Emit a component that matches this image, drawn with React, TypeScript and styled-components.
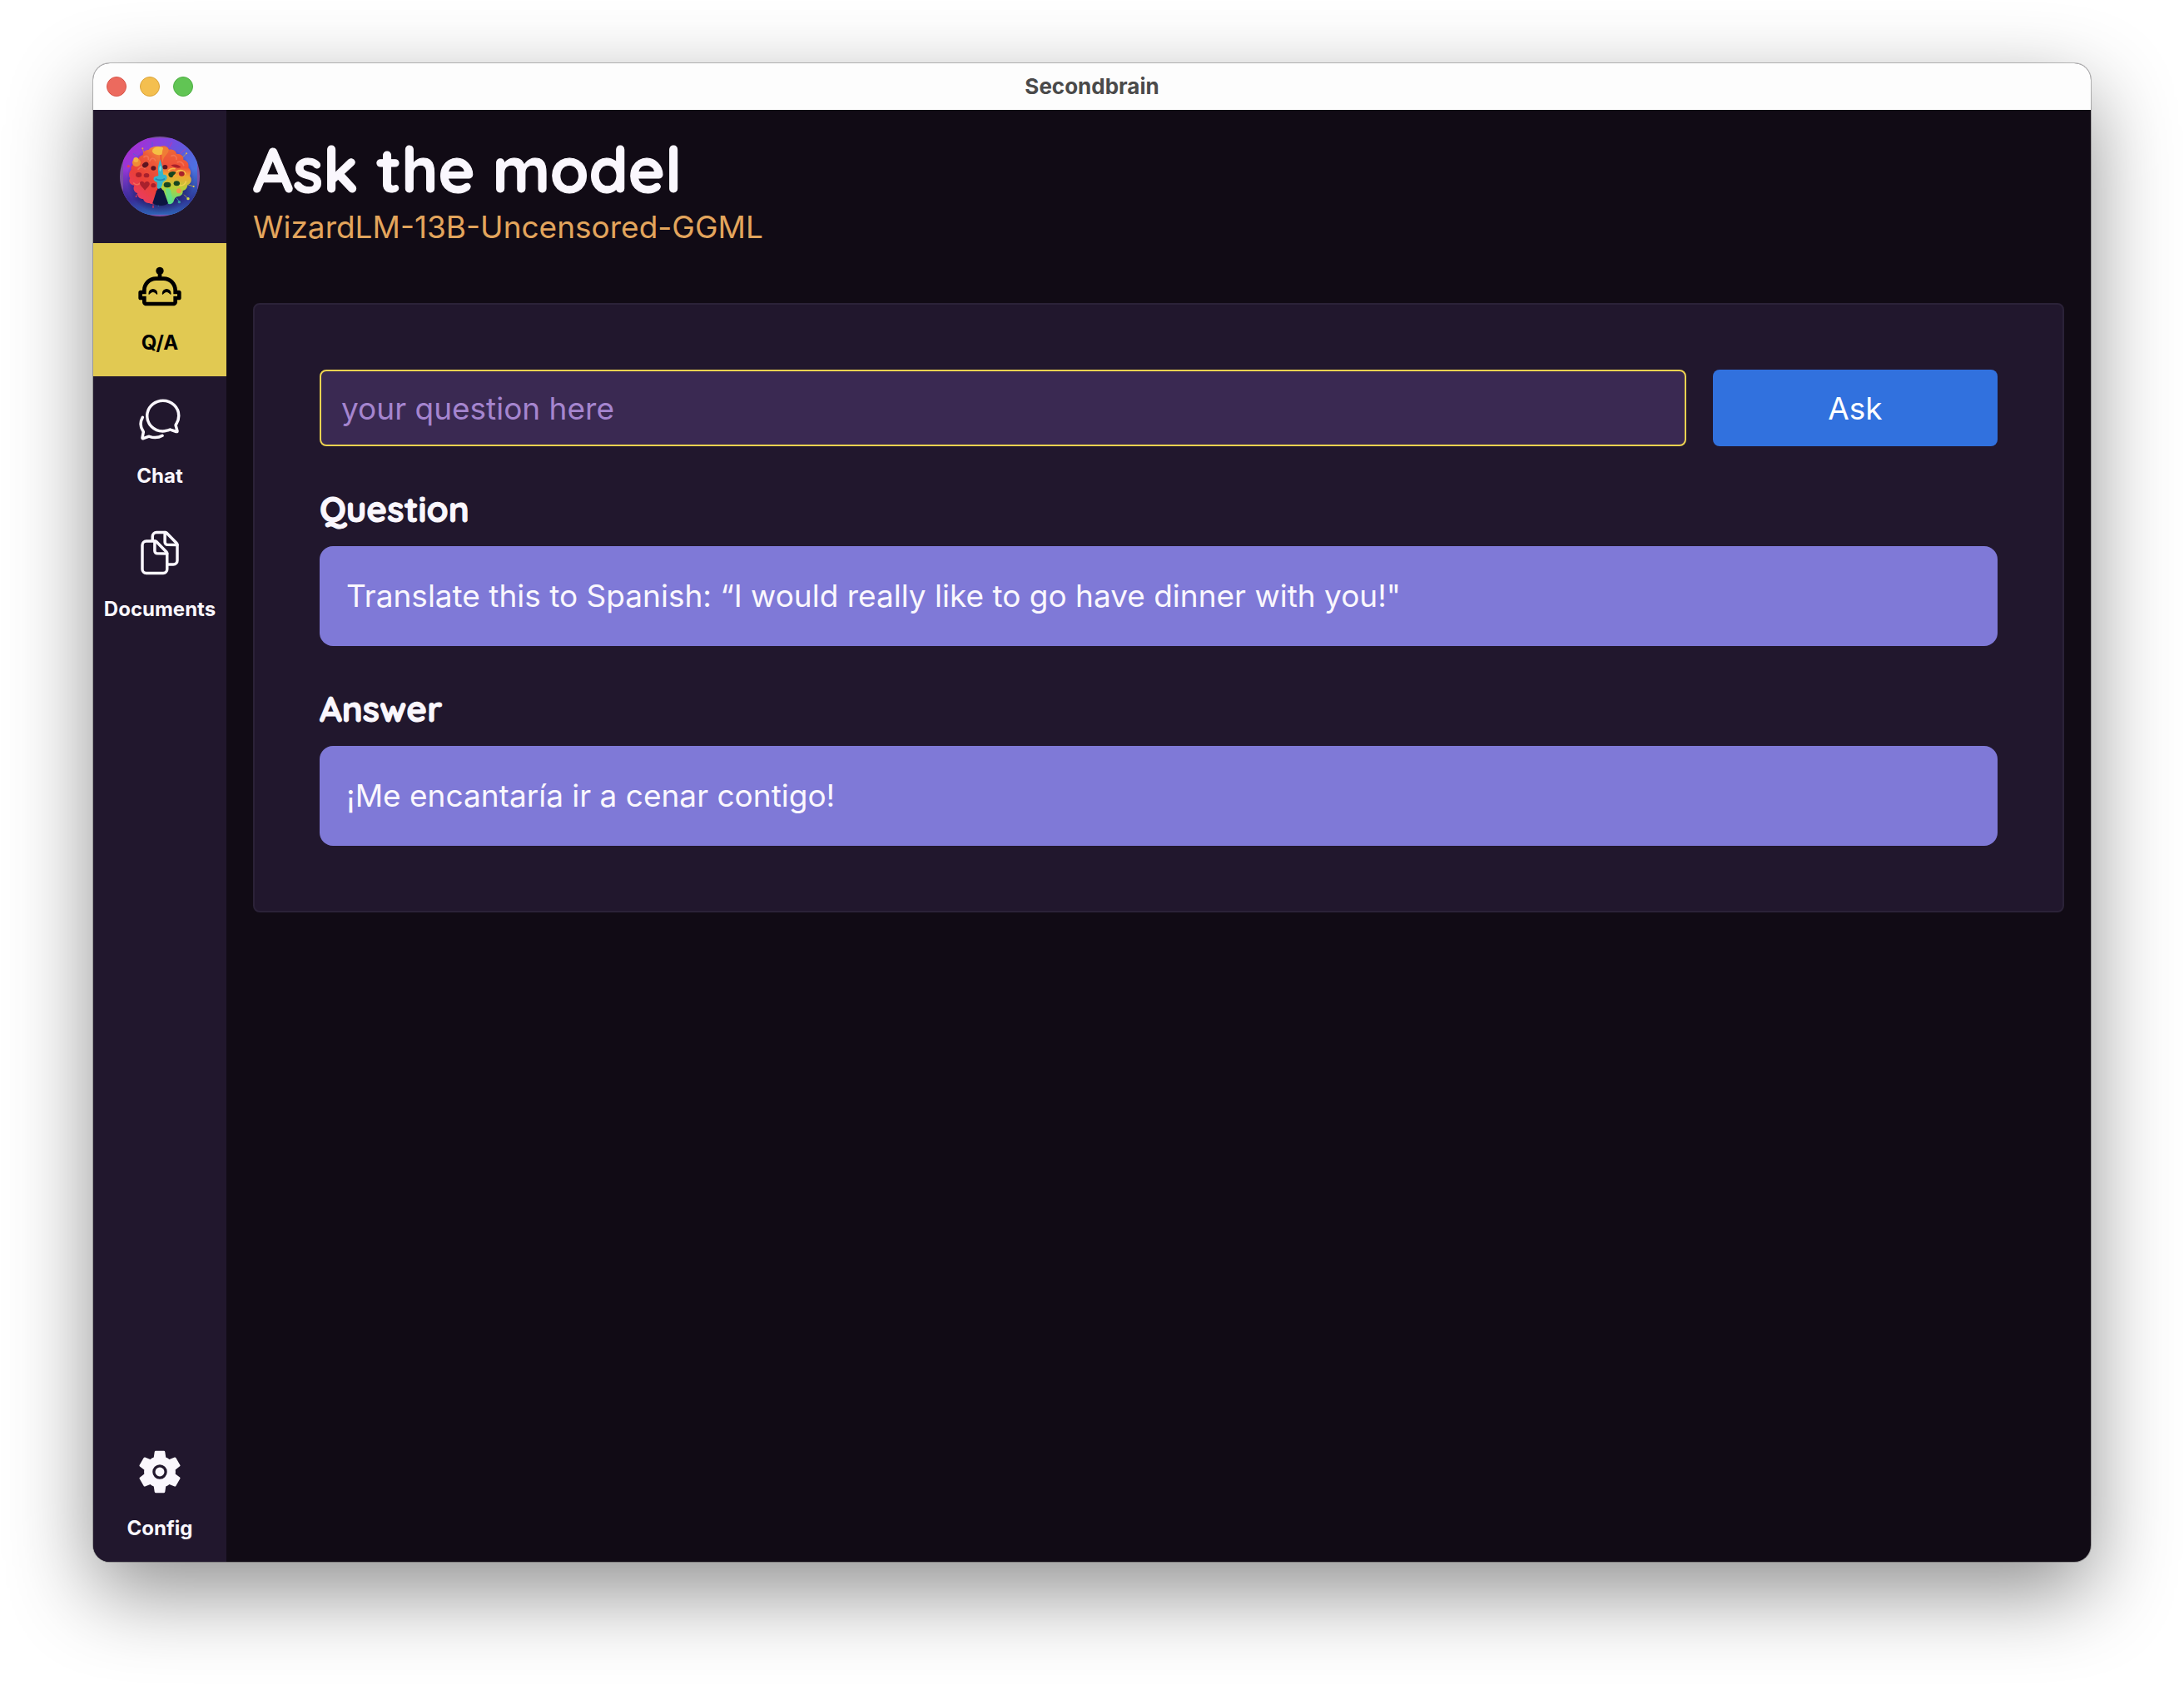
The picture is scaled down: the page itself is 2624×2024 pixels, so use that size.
import React from 'react';
import styled, { createGlobalStyle } from 'styled-components';
import { IoChatbubblesOutline, IoDocumentsOutline, IoSettingsSharp } from 'react-icons/io5';

const color = {
  base: '#110b15',
  panel: '#21172d',
  panelBorder: '#2b2238',
  text: '#faf7fd',
  accent: '#e1c952',
  focus: '#edd250',
  field: '#3a2952',
  placeholder: '#a585cf',
  primary: '#3171de',
  bubble: '#7f79d7',
  model: '#e3a55c',
};

const GlobalStyle = createGlobalStyle`
  *, *::before, *::after { box-sizing: border-box; }
  body {
    margin: 0;
    background: #ffffff;
    color: ${color.text};
    font-family: Inter, Roboto, "Liberation Sans", sans-serif;
    font-size: 37px;
  }
  h1, h2, p { margin: 0; }
`;

const Desktop = styled.div`
  display: flex;
  min-height: 100vh;
  padding: 76px 112px 148px;
`;

const Window = styled.div`
  flex: 1;
  min-width: 0;
  display: flex;
  flex-direction: column;
  overflow: hidden;
  border-radius: 20px;
  background: ${color.base};
  box-shadow: 0 0 0 1px rgba(0, 0, 0, 0.24), 0 36px 100px rgba(0, 0, 0, 0.44);
`;

const TitleBar = styled.header`
  display: grid;
  grid-template-columns: 1fr auto 1fr;
  align-items: center;
  height: 56px;
  padding: 0 16px;
  background: #fdfdfd;
`;

const Lights = styled.div`
  display: flex;
  gap: 16px;
`;

const Light = styled.button<{ $fill: string; $edge: string }>`
  width: 24px;
  height: 24px;
  padding: 0;
  border: 1px solid ${(p) => p.$edge};
  border-radius: 50%;
  background: ${(p) => p.$fill};
`;

const WindowTitle = styled.span`
  color: #4a4a4a;
  font-size: 26px;
  font-weight: 700;
  line-height: 32px;
`;

const Body = styled.div`
  flex: 1;
  display: flex;
`;

const Sidebar = styled.nav`
  flex: none;
  display: flex;
  flex-direction: column;
  width: 160px;
  background: ${color.panel};
`;

const Brand = styled.a`
  display: block;
  padding: 32px;
  line-height: 0;
`;

const NavItem = styled.a<{ $active?: boolean; $last?: boolean }>`
  display: flex;
  flex-direction: column;
  align-items: center;
  gap: 24px;
  margin-top: ${(p) => (p.$last ? 'auto' : '0')};
  padding: 24px 0;
  background: ${(p) => (p.$active ? color.accent : 'transparent')};
  color: ${(p) => (p.$active ? '#000000' : color.text)};
  font-size: 24px;
  font-weight: 700;
  line-height: 32px;
  text-decoration: none;

  > svg {
    width: 56px;
    height: 56px;
  }
`;

const Main = styled.main`
  flex: 1;
  min-width: 0;
  padding: 32px;
`;

const Title = styled.h1`
  font-family: Quicksand, Nunito, Inter, sans-serif;
  font-size: 75px;
  font-weight: 700;
  line-height: 78px;
  -webkit-text-stroke: 1px currentColor;
`;

const ModelName = styled.p`
  color: ${color.model};
  line-height: 62px;
`;

const Card = styled.section`
  margin-top: 60px;
  padding: 78px;
  border: 2px solid ${color.panelBorder};
  border-radius: 8px;
  background: ${color.panel};
`;

const AskForm = styled.form`
  display: flex;
  gap: 32px;
`;

const QuestionInput = styled.input`
  flex: 1;
  min-width: 0;
  height: 92px;
  padding: 0 24px;
  border: 2px solid ${color.focus};
  border-radius: 8px;
  outline: none;
  background: ${color.field};
  color: ${color.text};
  font: inherit;

  &::placeholder {
    color: ${color.placeholder};
    opacity: 1;
  }
`;

const AskButton = styled.button`
  width: 342px;
  height: 92px;
  border: 0;
  border-radius: 8px;
  background: ${color.primary};
  color: #ffffff;
  font: inherit;
`;

const Heading = styled.h2`
  margin: 50px 0 18px;
  font-family: Quicksand, Nunito, Inter, sans-serif;
  font-size: 42px;
  font-weight: 700;
  line-height: 52px;
  -webkit-text-stroke: 1px currentColor;
`;

const Bubble = styled.p`
  padding: 32px;
  border-radius: 16px;
  background: ${color.bubble};
  line-height: 56px;
`;

const RobotIcon = () => (
  <svg viewBox="0 0 24 24" fill="currentColor" aria-hidden="true">
    <path
      fillRule="evenodd"
      d="M22 14h-1c0-3.87-3.13-7-7-7h-1V5.73A2 2 0 1 0 11 5.73V7h-1c-3.87 0-7 3.13-7 7H2c-.55 0-1 .45-1 1v3c0 .55.45 1 1 1h1v1c0 1.1.9 2 2 2h14c1.1 0 2-.9 2-2v-1h1c.55 0 1-.45 1-1v-3c0-.55-.45-1-1-1zM21 17h-2v3H5v-3H3v-1h2v-2c0-2.76 2.24-5 5-5h4c2.76 0 5 2.24 5 5v2h2z"
    />
    <path d="M6.2 15.6a2.3 2.3 0 0 1 4.6 0q0 .4-.2.7l-1-.9q-1.1-.9-2.2 0l-1 .9q-.2-.3-.2-.7z" />
    <path d="M13.2 15.6a2.3 2.3 0 0 1 4.6 0q0 .4-.2.7l-1-.9q-1.1-.9-2.2 0l-1 .9q-.2-.3-.2-.7z" />
  </svg>
);

const GearIcon = () => (
  <svg viewBox="0 0 512 512" fill="currentColor" aria-hidden="true">
    <IoSettingsSharp size={512} />
    <circle cx="256" cy="256" r="50" />
  </svg>
);

const BrainLogo = () => (
  <svg width="96" height="96" viewBox="0 0 288 288" role="img" aria-label="Secondbrain">
    <defs>
      <linearGradient id="sky" x1="0.1" y1="0.1" x2="0.95" y2="0.75">
        <stop offset="0" stopColor="#a52fd0" />
        <stop offset="0.25" stopColor="#8a3fe0" />
        <stop offset="0.6" stopColor="#5a5fdd" />
        <stop offset="1" stopColor="#3f83e6" />
      </linearGradient>
      <linearGradient id="floor" x1="0" y1="0" x2="0" y2="1">
        <stop offset="0.4" stopColor="#1c1f6e" stopOpacity="0" />
        <stop offset="0.8" stopColor="#2b2486" stopOpacity="0.8" />
        <stop offset="1" stopColor="#2e63b4" />
      </linearGradient>
      <radialGradient id="shade">
        <stop offset="0.5" stopColor="#170b3a" />
        <stop offset="1" stopColor="#170b3a" stopOpacity="0" />
      </radialGradient>
      <linearGradient id="left" x1="0.8" y1="0" x2="0.3" y2="1">
        <stop offset="0" stopColor="#f08a3a" />
        <stop offset="0.22" stopColor="#ee5a3a" />
        <stop offset="0.6" stopColor="#ea4038" />
        <stop offset="1" stopColor="#e93a6c" />
      </linearGradient>
      <linearGradient id="right" x1="0.4" y1="0" x2="0.35" y2="1">
        <stop offset="0" stopColor="#ee6a38" />
        <stop offset="0.35" stopColor="#ee4f38" />
        <stop offset="0.5" stopColor="#f3a632" />
        <stop offset="0.72" stopColor="#b5d03a" />
        <stop offset="1" stopColor="#4fdf90" />
      </linearGradient>
      <clipPath id="disc">
        <circle cx="144" cy="144" r="144" />
      </clipPath>
    </defs>
    <g clipPath="url(#disc)">
      <rect width="288" height="288" fill="#7a4fa6" />
      <rect x="12" y="6" width="267" height="275" fill="url(#sky)" />
      <rect x="12" y="6" width="267" height="275" fill="url(#floor)" />
      <ellipse cx="146" cy="156" rx="122" ry="120" fill="url(#shade)" opacity="0.85" />
      <g strokeWidth="2.5" strokeLinecap="round" fill="none">
        <path d="M117 20v18M49 62l16 10" stroke="#4f63d8" />
        <path d="M82 44l5 16" stroke="#d8863a" />
        <path d="M187 22l-8 16M218 62l18-17" stroke="#c63aa0" />
        <path d="M227 74l12-12M240 172l26 8M232 210l14 14" stroke="#b9a94a" />
        <path d="M139 250v-46M205 222l10 14" stroke="#2f8fc4" />
        <path d="M120 240v14M62 208l-4 8" stroke="#c2345e" />
      </g>
      <circle cx="31" cy="107" r="5" fill="#e2405a" />
      <circle cx="82" cy="43" r="3" fill="#f0a040" />
      <circle cx="240" cy="61" r="3" fill="#f0b040" />
      <circle cx="266" cy="180" r="3" fill="#e8d04a" />
      <circle cx="246" cy="224" r="5" fill="#d6d84a" />
      <circle cx="214" cy="236" r="5" fill="#36a09c" />
      <circle cx="59" cy="216" r="3" fill="#d23a60" />
      <circle cx="120" cy="254" r="3" fill="#d23a60" />
      <path
        fill="url(#left)"
        d="M144 36c-18-3-34 3-40 12-13 0-21 8-21 19-15 3-22 18-17 31-15-2-28 8-25 21-9 10-10 23-4 31-8 12 1 26 15 26-6 12 0 25 11 28 0 14 9 21 21 21 4 12 13 15 22 15 9 6 19 2 20-8l8-38c3-8 6-16 10-20z"
      />
      <path
        fill="url(#right)"
        d="M144 36c16-5 30 0 32 11 15-3 26 4 28 15 16-1 27 8 25 21 15 5 21 16 18 29 10 9 10 21 5 30 10 13 5 29-8 33-1 11-8 19-17 20 1 14-7 20-18 21-9 1-12 9-15 17-4 12-22 15-24 2l-16-42c-3-6-7-9-10-11z"
      />
      <circle cx="60" cy="94" r="15" fill="#f08c34" />
      <circle cx="58" cy="84" r="9" fill="#f5b144" />
      <ellipse cx="141" cy="52" rx="24" ry="15" fill="#f5c044" />
      <path d="M158 38c18-2 22 12 14 22s-18 18-16 34c-6-12-6-40 2-56z" fill="#f07c36" />
      <g fill="none" stroke="#f57a5c" strokeWidth="5" strokeLinecap="round" opacity="0.75">
        <path d="M87 74c8-8 18-2 16 8M108 88c4-12 16-12 20-2M66 118c8-12 20-10 24-2" />
        <path d="M186 70c10-6 20 2 18 12M208 92c10-4 20 2 22 12M50 168c8 8 18 6 22 0" />
      </g>
      <g fill="none" stroke="#f9cf50" strokeWidth="5" strokeLinecap="round" opacity="0.8">
        <path d="M206 126c10-8 26-4 30 8M216 176c10 2 20-4 22-14M176 122c6-6 14-8 22-6" />
      </g>
      <g fill="#5e1420">
        <ellipse cx="92" cy="102" rx="12" ry="9" transform="rotate(-35 92 102)" />
        <ellipse cx="121" cy="114" rx="9" ry="8" />
        <ellipse cx="163" cy="110" rx="9" ry="8" />
      </g>
      <g fill="#a8202c">
        <ellipse cx="96" cy="140" rx="10" ry="8" />
        <ellipse cx="121" cy="176" rx="9" ry="8" />
        <ellipse cx="68" cy="138" rx="11" ry="9" />
        <path d="M184 103c14-6 30-2 36 8-10 4-26 2-36-8z" />
        <path d="M72 166c6-8 14-4 17 2 4-7 14-8 18 0 2 10-8 16-17 26-6-10-18-16-18-28z" />
        <ellipse cx="223" cy="134" rx="10" ry="9" />
      </g>
      <g fill="#16451f">
        <path d="M176 132c6-7 18-8 25-4 2 7-8 8-11 18-8 5-18-4-14-14z" />
        <ellipse cx="171" cy="174" rx="13" ry="10" />
        <ellipse cx="205" cy="169" rx="11" ry="9" />
      </g>
      <circle cx="213" cy="196" r="9" fill="#f2944a" />
      <path d="M132 196c4-6 22-6 26 0l16 44c-10 12-40 12-56 0z" fill="#0c1540" />
      <path
        fill="#35b6cc"
        d="M145 82l8 26c3 12 1 22 4 30 8-2 14 4 13 12-2 10-14 10-16 18-2 12-8 22-16 20-8-4 0-18-5-24-8-3-13-8-11-15 4-7 12-5 17-8 0-12-3-22-1-33z"
      />
      <path d="M146 104c6 8 4 16-1 22-4-6-5-14 1-22z" fill="#7edce0" />
      <path d="M128 152c10 6 24 6 34 0" fill="none" stroke="#2587b4" strokeWidth="5" />
      <path d="M164 190c8-8 18-4 20 6l6 34c-4 10-12 8-16-2z" fill="#5fe08c" opacity="0.8" />
    </g>
  </svg>
);

const exchange = [
  { label: 'Question', text: 'Translate this to Spanish: “I would really like to go have dinner with you!"' },
  { label: 'Answer', text: '¡Me encantaría ir a cenar contigo!' },
];

export default function App() {
  return (
    <Desktop>
      <GlobalStyle />
      <Window>
        <TitleBar>
          <Lights>
            <Light $fill="#ec6a5e" $edge="#d8584d" aria-label="Close" />
            <Light $fill="#f4bf4f" $edge="#d9a33b" aria-label="Minimize" />
            <Light $fill="#61c554" $edge="#4eae43" aria-label="Zoom" />
          </Lights>
          <WindowTitle>Secondbrain</WindowTitle>
        </TitleBar>
        <Body>
          <Sidebar aria-label="Sections">
            <Brand href="#home">
              <BrainLogo />
            </Brand>
            <NavItem href="#qa" $active aria-current="page">
              <RobotIcon />
              Q/A
            </NavItem>
            <NavItem href="#chat">
              <IoChatbubblesOutline aria-hidden="true" />
              Chat
            </NavItem>
            <NavItem href="#documents">
              <IoDocumentsOutline aria-hidden="true" />
              Documents
            </NavItem>
            <NavItem href="#config" $last>
              <GearIcon />
              Config
            </NavItem>
          </Sidebar>
          <Main>
            <Title>Ask the model</Title>
            <ModelName>WizardLM-13B-Uncensored-GGML</ModelName>
            <Card>
              <AskForm onSubmit={(e) => e.preventDefault()}>
                <QuestionInput type="text" aria-label="Your question" placeholder="your question here" />
                <AskButton type="submit">Ask</AskButton>
              </AskForm>
              {exchange.map((item) => (
                <React.Fragment key={item.label}>
                  <Heading>{item.label}</Heading>
                  <Bubble>{item.text}</Bubble>
                </React.Fragment>
              ))}
            </Card>
          </Main>
        </Body>
      </Window>
    </Desktop>
  );
}
